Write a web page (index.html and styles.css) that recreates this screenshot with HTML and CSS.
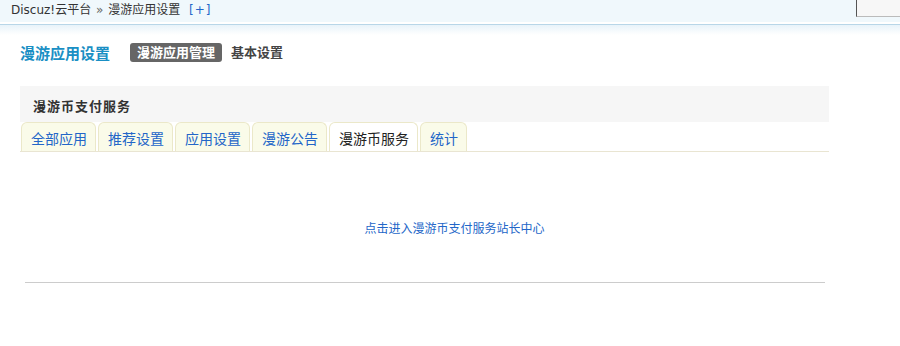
FILE: index.html
```html
<!DOCTYPE html>
<html lang="zh-CN">
<head>
<meta charset="UTF-8">
<title>漫游应用设置</title>
<link rel="stylesheet" href="styles.css">
</head>
<body>
<div class="topbar">
    <div class="crumb">Discuz!云平台 <span class="sep">&raquo;</span> 漫游应用设置 <a href="#" class="plus">[+]</a></div>
    <div class="topbox"></div>
</div>
<div class="shade"></div>
<div class="header">
    <h3>漫游应用设置</h3>
    <ul class="subnav">
        <li class="current"><a href="#">漫游应用管理</a></li>
        <li><a href="#">基本设置</a></li>
    </ul>
</div>
<div class="main">
    <div class="panel">漫游币支付服务</div>
    <ul class="tabs">
        <li><a href="#">全部应用</a></li>
        <li><a href="#">推荐设置</a></li>
        <li><a href="#">应用设置</a></li>
        <li><a href="#">漫游公告</a></li>
        <li class="active"><a href="#">漫游币服务</a></li>
        <li><a href="#">统计</a></li>
    </ul>
    <div class="content">
        <a href="#">点击进入漫游币支付服务站长中心</a>
    </div>
</div>
<div class="footline"></div>
</body>
</html>
```

FILE: styles.css
```css
body {
    margin: 0;
    font-family: "Liberation Sans", "Noto Sans CJK SC", sans-serif;
    font-size: 12px;
    color: #333;
    background: #fff;
}
a {
    text-decoration: none;
}
ul {
    list-style: none;
    margin: 0;
    padding: 0;
}
.topbar {
    height: 22px;
    background: #f0f8fc;
    display: flex;
    justify-content: space-between;
    border-bottom: 2px solid #fff;
}
.crumb {
    padding-left: 11px;
    line-height: 20px;
    font-family: "DejaVu Sans", "Noto Sans CJK SC", sans-serif;
    color: #333;
}
.sep {
    color: #666;
    margin: 0 1px;
}
.plus {
    color: #2366c8;
    margin-left: 5px;
    letter-spacing: 1px;
}
.topbox {
    width: 43px;
    height: 16px;
    background: #f7f7f7;
    border-left: 1px solid #555;
    border-bottom: 1px solid #bbb;
}
.shade {
    height: 10px;
    border-top: 1px solid #b8d6e8;
    background: linear-gradient(#e8f3fa, #fff);
}
.header {
    display: flex;
    align-items: center;
    padding: 4px 0 0 20px;
    height: 26px;
}
.header h3 {
    margin: 0 20px 0 0;
    font-size: 15px;
    color: #1a8fc4;
}
.subnav {
    display: flex;
    gap: 9px;
}
.subnav a {
    display: block;
    font-size: 13px;
    font-weight: bold;
    color: #444;
    line-height: 19px;
}
.subnav .current a {
    background: #666;
    color: #fff;
    border-radius: 3px;
    padding: 0 7px;
}
.main {
    margin: 21px 71px 0 20px;
}
.panel {
    background: #f6f6f6;
    height: 36px;
    line-height: 42px;
    padding-left: 13px;
    font-size: 13px;
    letter-spacing: 1px;
    font-weight: bold;
    color: #333;
}
.tabs {
    display: flex;
    gap: 2px;
    padding-left: 1px;
    border-bottom: 1px solid #e9e5d2;
}
.tabs li {
    border: 1px solid #ebe8c9;
    border-bottom: none;
    border-radius: 6px 6px 0 0;
    background: #fafbe9;
}
.tabs a {
    display: block;
    height: 28px;
    line-height: 32px;
    padding: 0 8px 0 9px;
    font-size: 14px;
    color: #2366c8;
}
.tabs .active {
    background: #fff;
}
.tabs .active a {
    color: #222;
}
.content {
    height: 130px;
    text-align: center;
    line-height: 154px;
    padding-left: 60px;
}
.content a {
    color: #2366c8;
}
.footline {
    margin: 0 75px 0 25px;
    border-top: 1px solid #ccc;
}
```
